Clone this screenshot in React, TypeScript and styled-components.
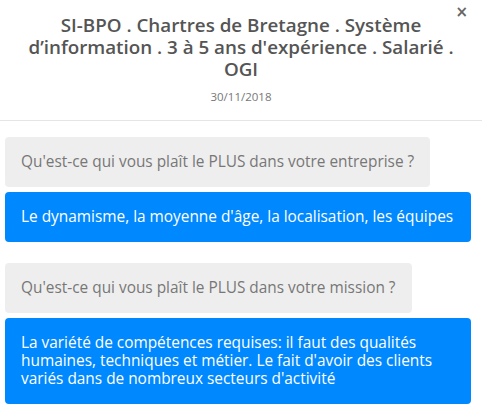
import React from "react";
import styled, { createGlobalStyle } from "styled-components";

const GlobalStyle = createGlobalStyle`
  body {
    margin: 0;
    background: #ffffff;
    font-family: "Open Sans", "Liberation Sans", sans-serif;
  }
`;

type QA = { question: string; answer: string };

const items: QA[] = [
  {
    question: "Qu'est-ce qui vous plaît le PLUS dans votre entreprise ?",
    answer: "Le dynamisme, la moyenne d'âge, la localisation, les équipes",
  },
  {
    question: "Qu'est-ce qui vous plaît le PLUS dans votre mission ?",
    answer:
      "La variété de compétences requises: il faut des qualités humaines, techniques et métier. Le fait d'avoir des clients variés dans de nombreux secteurs d'activité",
  },
];

const App = () => {
  return (
    <>
      <GlobalStyle />
      <Modal>
        <Header>
          <Close aria-label="Fermer">×</Close>
          <Title>
            SI-BPO . Chartres de Bretagne . Système d’information . 3 à 5 ans
            d'expérience . Salarié . OGI
          </Title>
          <Date>30/11/2018</Date>
        </Header>
        <Body>
          {items.map((item) => (
            <Pair key={item.question}>
              <Question>{item.question}</Question>
              <Answer>{item.answer}</Answer>
            </Pair>
          ))}
        </Body>
      </Modal>
    </>
  );
};

export default App;

const Modal = styled.div`
  width: 482px;
  height: 420px;
  overflow: hidden;
  background: #ffffff;
`;

const Header = styled.div`
  position: relative;
  padding: 14px 18px 0;
  height: 106px;
  border-bottom: 1px solid #e5e5e5;
  text-align: center;
`;

const Close = styled.span`
  position: absolute;
  top: 3px;
  right: 14px;
  color: #666666;
  font-family: "DejaVu Sans", sans-serif;
  font-size: 15px;
  font-weight: 700;
`;

const Title = styled.div`
  color: #555555;
  font-size: 18.8px;
  font-weight: 600;
  line-height: 22px;
`;

const Date = styled.div`
  margin-top: 8px;
  color: #777777;
  font-size: 11.5px;
  line-height: 17px;
`;

const Body = styled.div`
  display: flex;
  flex-direction: column;
  gap: 21px;
  padding: 16px 11px 0 5px;
`;

const Pair = styled.div`
  display: flex;
  flex-direction: column;
  align-items: flex-start;
  gap: 5px;
`;

const Bubble = styled.div`
  box-sizing: border-box;
  padding: 16px;
  border-radius: 4px;
  font-size: 15.4px;
  line-height: 18px;
`;

const Question = styled(Bubble)`
  background: #eeeeee;
  color: #777777;
`;

const Answer = styled(Bubble)`
  align-self: stretch;
  background: #0088ff;
  color: #ffffff;
`;
